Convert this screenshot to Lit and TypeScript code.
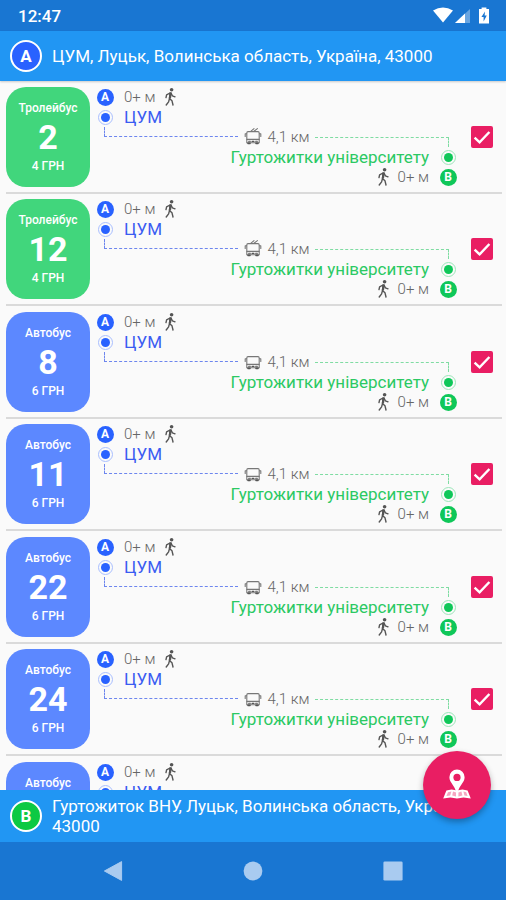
import { LitElement, html, css, svg } from "lit";
import { customElement, property } from "lit/decorators.js";
import { classMap } from "lit/directives/class-map.js";

type Kind = "trolley" | "bus";

interface Route {
  kind: Kind;
  number: string;
  fare: string;
}

const ROUTES: Route[] = [
  { kind: "trolley", number: "2", fare: "4 ГРН" },
  { kind: "trolley", number: "12", fare: "4 ГРН" },
  { kind: "bus", number: "8", fare: "6 ГРН" },
  { kind: "bus", number: "11", fare: "6 ГРН" },
  { kind: "bus", number: "22", fare: "6 ГРН" },
  { kind: "bus", number: "24", fare: "6 ГРН" },
  { kind: "bus", number: "27", fare: "6 ГРН" },
];

const KIND_NAMES: Record<Kind, string> = { trolley: "Тролейбус", bus: "Автобус" };

const walkIcon = html`<svg class="walk" viewBox="0 0 14 20" aria-hidden="true">
  <circle cx="8.6" cy="2.8" r="1.8" fill="#555" />
  <path
    d="M7.4 6 L6.4 11.4 L9 13.8 L10 18 M6.5 11.6 L5.6 14.8 L3.2 18 M7 6 L3.6 7.8 L3 10.6 M8 6.2 L9.4 8.8 L12 9.8"
    fill="none" stroke="#555" stroke-width="1.4" stroke-linecap="round" stroke-linejoin="round" />
  <path d="M6.4 5.4 L8.8 5.6 L8 11.6 L5.8 11.4 Z" fill="#555" />
</svg>`;

const vehicleIcon = (kind: Kind) => html`<svg class="vehicle" viewBox="0 0 18 20" aria-hidden="true">
  <g fill="none" stroke="#777" stroke-width="1.1" stroke-linecap="round" stroke-linejoin="round">
    ${kind === "trolley"
      ? svg`<path d="M7 4.2 L10 1.6 M10 4.2 L13.4 1.6" />`
      : null}
    <path d="M4 4.6 H14 Q15.2 4.6 15.2 6 V12.4 H2.8 V6 Q2.8 4.6 4 4.6 Z" />
    <path d="M1.2 9.4 V6.8 H2.6 M16.8 9.4 V6.8 H15.4" />
    <path d="M2.8 12.6 V15.8 H15.2 V12.6" />
    <path d="M4.6 14.2 H6.4 M11.6 14.2 H13.4 M8 14.4 H10" stroke="#555" />
    <path d="M4 16.4 H6 M12 16.4 H14" stroke="#555" stroke-width="1.6" />
  </g>
</svg>`;

@customElement("route-row")
export class RouteRow extends LitElement {
  @property({ attribute: false }) route!: Route;

  static styles = css`
    :host {
      display: flex;
      font-weight: 300;
    }
    .card {
      flex: none;
      box-sizing: border-box;
      width: 84px;
      height: 100px;
      border-radius: 20px;
      color: #fff;
      display: flex;
      flex-direction: column;
      align-items: center;
      justify-content: center;
      font-size: 12px;
      line-height: 20px;
      font-weight: 500;
    }
    .trolley { background: #41d67c; }
    .bus { background: #5c88ff; }
    .number {
      font-size: 34px;
      line-height: 38px;
      font-weight: 700;
    }
    .details {
      flex: 1;
      min-width: 0;
      padding: 0 6px;
    }
    .line {
      display: flex;
      align-items: center;
      height: 20px;
      gap: 8px;
      font-size: 15px;
      color: #666;
    }
    .end { justify-content: flex-end; }
    .stop-name { font-size: 17px; font-weight: 400; }
    .from { color: #3a5cf2; }
    .to { color: #2bc963; }
    .slot {
      flex: none;
      width: 18px;
      display: flex;
      justify-content: center;
    }
    .badge {
      width: 17px;
      height: 17px;
      border-radius: 50%;
      color: #fff;
      font-size: 12px;
      line-height: 17px;
      font-weight: 700;
      text-align: center;
    }
    .a { background: #2962ff; }
    .b { background: #0fc759; }
    .stop {
      box-sizing: border-box;
      width: 15px;
      height: 15px;
      border-radius: 50%;
      border: 1px solid;
      padding: 2px;
    }
    .stop-a { border-color: #a9bfff; background: #2962ff content-box; }
    .stop-b { border-color: #9be6b9; background: #0fc759 content-box; }
    .name { padding-left: 2px; }
    .end .name { padding: 0 2px 0 0; }
    .track { gap: 6px; padding: 0 8px; }
    .leg {
      flex: 1;
      height: 10px;
      box-sizing: border-box;
    }
    .leg-a {
      align-self: flex-start;
      border-left: 1px dashed #6d86ee;
      border-bottom: 1px dashed #6d86ee;
    }
    .leg-b {
      align-self: flex-end;
      border-right: 1px dashed #7fdca2;
      border-top: 1px dashed #7fdca2;
    }
    .walk { width: 14px; height: 20px; }
    .vehicle { width: 18px; height: 20px; }
    .pick {
      flex: none;
      align-self: center;
      display: grid;
      margin: 0 9px 0 8px;
    }
    .pick > * { grid-area: 1 / 1; }
    input {
      appearance: none;
      margin: 0;
      width: 22px;
      height: 22px;
      box-sizing: border-box;
      border: 2px solid #777;
      border-radius: 2px;
    }
    input:checked { background: #e91e63; border-color: #e91e63; }
    .tick {
      width: 22px;
      height: 22px;
      pointer-events: none;
      visibility: hidden;
    }
    input:checked + .tick { visibility: visible; }
  `;

  render() {
    const { kind, number, fare } = this.route;
    return html`
      <div class=${classMap({ card: true, [kind]: true })}>
        <span>${KIND_NAMES[kind]}</span>
        <span class="number">${number}</span>
        <span>${fare}</span>
      </div>
      <div class="details">
        <div class="line">
          <span class="slot"><span class="badge a">A</span></span>
          <span class="name">0+ м</span>${walkIcon}
        </div>
        <div class="line stop-name from">
          <span class="slot"><span class="stop stop-a"></span></span>
          <span class="name">ЦУМ</span>
        </div>
        <div class="line track">
          <span class="leg leg-a"></span>
          ${vehicleIcon(kind)}
          <span>4,1 км</span>
          <span class="leg leg-b"></span>
        </div>
        <div class="line stop-name end to">
          <span class="name">Гуртожитки університету</span>
          <span class="slot"><span class="stop stop-b"></span></span>
        </div>
        <div class="line end">
          ${walkIcon}
          <span class="name">0+ м</span>
          <span class="slot"><span class="badge b">B</span></span>
        </div>
      </div>
      <label class="pick">
        <input type="checkbox" checked aria-label="${KIND_NAMES[kind]} ${number}" />
        <svg class="tick" viewBox="0 0 22 22" aria-hidden="true">
          <path d="M3.6 11.6 L8.6 16.4 L18.4 6" fill="none" stroke="#fff" stroke-width="2.4" />
        </svg>
      </label>
    `;
  }
}

@customElement("app-root")
export class AppRoot extends LitElement {
  static styles = css`
    :host {
      display: flex;
      flex-direction: column;
      height: 100vh;
      background: #fafafa;
      font-family: Roboto, "Noto Sans", sans-serif;
      overflow: hidden;
    }
    .status {
      flex: none;
      height: 31px;
      box-sizing: border-box;
      padding: 0 15px 0 18px;
      display: flex;
      align-items: center;
      background: #1976d2;
      color: #fff;
      font-size: 17px;
      font-weight: 500;
    }
    .time { flex: 1; }
    .icons { width: 58px; height: 18px; }
    .place {
      flex: none;
      position: relative;
      box-sizing: border-box;
      display: flex;
      align-items: center;
      gap: 10px;
      padding: 0 10px;
      min-height: 50px;
      background: #2196f3;
      color: #fff;
      font-size: 17px;
      line-height: 20px;
    }
    .origin { box-shadow: 0 1px 2px rgba(0, 0, 0, 0.2); z-index: 1; }
    .target { min-height: 52px; }
    .point {
      flex: none;
      box-sizing: border-box;
      width: 32px;
      height: 32px;
      border: 2px solid #fff;
      border-radius: 50%;
      line-height: 28px;
      font-weight: 700;
      text-align: center;
    }
    .point-a { background: #2962ff; }
    .point-b { background: #0cc943; }
    .routes {
      flex: 1;
      min-height: 0;
      margin: 0;
      padding: 0 4px 0 6px;
      list-style: none;
      overflow-y: auto;
      scrollbar-width: none;
    }
    .routes li {
      padding: 6px 0 5px;
      border-bottom: 2px solid #dadada;
    }
    .routes li:nth-child(even) { padding: 5px 0; }
    .fab {
      position: absolute;
      right: 15px;
      bottom: 23px;
      width: 68px;
      height: 68px;
      padding: 0;
      border: 0;
      border-radius: 50%;
      background: #e91e63;
      box-shadow: 0 3px 6px rgba(0, 0, 0, 0.3);
      display: grid;
      place-items: center;
    }
    .fab svg { width: 28px; height: 32px; }
    .nav {
      flex: none;
      height: 58px;
      display: flex;
      justify-content: center;
      gap: 82px;
      background: #1976d2;
    }
    .nav button {
      width: 58px;
      padding: 0;
      border: 0;
      background: none;
      display: grid;
      place-items: center;
    }
    .nav svg { width: 20px; height: 20px; fill: #a9cbf0; }
  `;

  render() {
    return html`
      <div class="status">
        <span class="time">12:47</span>
        <svg class="icons" viewBox="0 0 58 18" aria-hidden="true">
          <path d="M0 3.6 Q10 -2.6 20 3.6 L10 15.4 Z" fill="#fff" />
          <path d="M37 2 V16 H22 Z" fill="#fff" opacity="0.35" />
          <path d="M32 6.6 V16 H22 Z" fill="#fff" />
          <path d="M48.6 0.4 H53.4 V2 H56 V16.4 H46 V2 H48.6 Z" fill="#fff" />
          <path d="M52 4.4 L48.4 10 H50.6 V14.4 L53.8 8.6 H51.6 Z" fill="#1976d2" />
        </svg>
      </div>
      <header class="place origin">
        <span class="point point-a">A</span>
        <span>ЦУМ, Луцьк, Волинська область, Україна, 43000</span>
      </header>
      <ul class="routes">
        ${ROUTES.map((route) => html`<li><route-row .route=${route}></route-row></li>`)}
      </ul>
      <footer class="place target">
        <span class="point point-b">B</span>
        <span>Гуртожиток ВНУ, Луцьк, Волинська область, Україна, 43000</span>
        <button class="fab" aria-label="Карта">
          <svg viewBox="0 0 28 32" aria-hidden="true">
            <path d="M3.4 21.4 L8.6 20.4 L14 21.6 L19.4 20.4 L24.6 21.4 L27.8 29.6 L20.6 28.4 L14 29.6 L7.4 28.4 L0.2 29.6 Z" fill="#fff" />
            <path d="M5 23.2 L8.4 22.4 L7.2 26.4 L3.4 27 Z M10 22.6 L13 23.4 V27.4 L9.2 26.4 Z M15.4 23.4 L18.4 22.6 L19.4 26.4 L15.4 27.4 Z M20.4 22.4 L23.2 23.2 L24.6 27 L21.4 26.4 Z" fill="#e91e63" opacity="0.4" />
            <path d="M14 0.6 A7.6 7.6 0 0 0 6.4 8.2 C6.4 13.6 12 16.4 13 23 H15 C16 16.4 21.6 13.6 21.6 8.2 A7.6 7.6 0 0 0 14 0.6 Z" fill="#fff" />
            <circle cx="14" cy="8.4" r="3.6" fill="#e91e63" />
          </svg>
        </button>
      </footer>
      <nav class="nav">
        <button aria-label="Назад">
          <svg viewBox="0 0 20 20"><path d="M1.4 10 L18.6 0.6 V19.4 Z" stroke="#a9cbf0" stroke-linejoin="round" /></svg>
        </button>
        <button aria-label="Додому">
          <svg viewBox="0 0 20 20"><circle cx="10" cy="10" r="9.4" /></svg>
        </button>
        <button aria-label="Огляд">
          <svg viewBox="0 0 20 20"><rect x="0.4" y="0.4" width="19.2" height="19.2" rx="1.4" /></svg>
        </button>
      </nav>
    `;
  }
}
